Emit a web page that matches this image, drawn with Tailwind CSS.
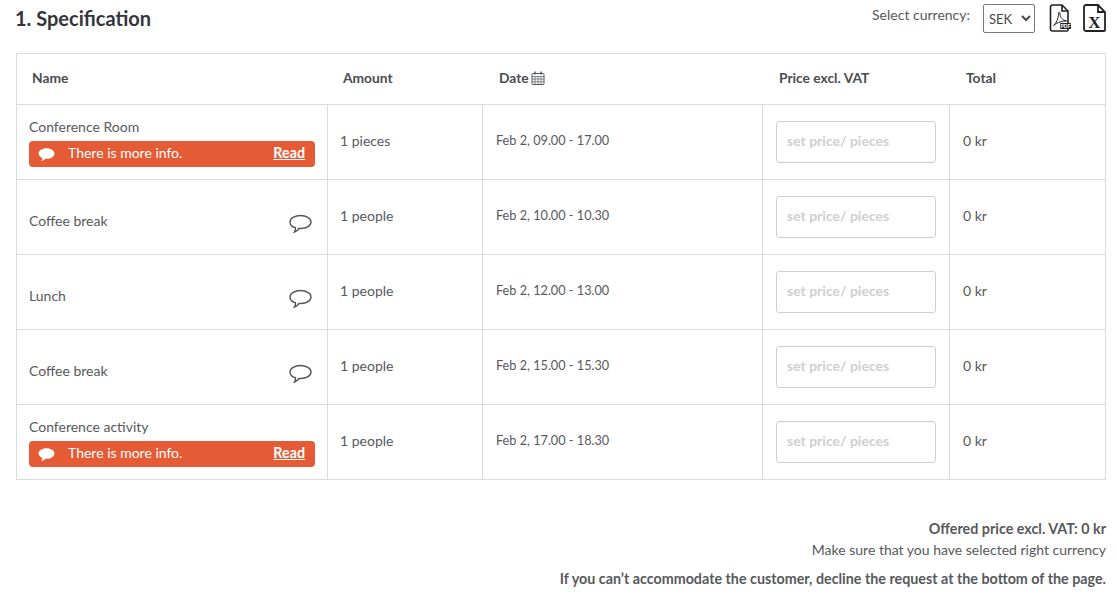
<!DOCTYPE html>
<html><head><meta charset="utf-8"><script src="https://cdn.jsdelivr.net/npm/@tailwindcss/browser@4"></script></head>
<body class="bg-white font-['Lato','Open_Sans',sans-serif] text-[#57595d] text-[14px] overflow-hidden">
<div class="w-[1117px] h-[597px] pl-[16px] pr-[11px] overflow-hidden">
  <div class="flex items-start justify-between h-[53px]">
    <h1 class="text-[20px] leading-[24px] mt-[6px] -ml-px font-bold text-[#33353a]">1. Specification</h1>
    <div class="flex items-start mt-[4px]">
      <span class="text-[14px] leading-[22px] mr-[13px]">Select currency:</span>
      <select class="w-[52px] h-[29px] border border-[#77797c] rounded-[2px] text-[13px] pl-px bg-white mr-[14px] text-[#44464a]"><option>SEK</option></select>
      <svg class="w-[22px] h-[28px] mr-[12px]" viewBox="0 0 22 28" fill="none" stroke="#222" stroke-width="1.600"><path d="M19 19V7l-6-6H3.500a2 2 0 0 0-2 2v22a2 2 0 0 0 2 2H18a1 1 0 0 0 1-1v-1"/><path d="M13 1v6h6"/><path d="M4.500 21.500C7 20 9.500 14 9.500 10c0-2.500 1.500-2.500 1.500 0 0 3 2.500 6.500 6.500 7-3.500 0-9 1-13 4.500z" stroke-width="1"/><rect x="11" y="19" width="11" height="6" rx="1" fill="#222" stroke="none"/><text x="16.500" y="24" text-anchor="middle" fill="#fff" stroke="none" font-family="Liberation Sans" font-weight="700" font-size="5">PDF</text></svg>
      <svg class="w-[23px] h-[28px]" viewBox="0 0 23 28" fill="none" stroke="#222" stroke-width="1.800"><path d="M1 3a2 2 0 0 1 2-2h12l7 7v18a1 1 0 0 1-1 1H3a2 2 0 0 1-2-2z"/><path d="M15 1v7h7"/><text x="11.500" y="24" text-anchor="middle" fill="#222" stroke="none" font-family="Liberation Serif" font-weight="700" font-size="17">X</text></svg>
    </div>
  </div>
  <div class="w-[1090px] border border-[#dcdcdc]">
    <div class="grid grid-cols-[311px_155px_280px_187px_1fr] h-[51px] items-center font-bold text-[13.8px] text-[#4a4c50] border-b border-[#dcdcdc] pb-[2px]">
      <div class="pl-[15px]">Name</div><div class="pl-[15px]">Amount</div>
      <div class="pl-[16px] flex items-center gap-[2px]">Date
        <svg class="w-[14px] h-[14px]" viewBox="0 0 14 14" fill="none" stroke="#55575b"><rect x="1" y="2.500" width="12" height="11" rx="1"/><path d="M1 5.500h12M1 8h12M1 10.800h12M4 5.500v8M7 5.500v8M10 5.500v8" stroke-width=".7"/><path d="M4 .5v3M10 .5v3" stroke-width="1.500"/></svg>
      </div>
      <div class="pl-[16px]">Price excl. VAT</div><div class="pl-[16px]">Total</div>
    </div>
    <div class="grid grid-cols-[311px_155px_280px_187px_1fr] h-[75px] border-b border-[#dcdcdc] items-center">
      <div class="h-full border-r border-[#dcdcdc] pl-[12px] pr-[12px] pt-[13px]">
        <div class="leading-[18px] mb-[5px]">Conference Room</div>
        <div class="h-[26px] bg-[#e55b36] rounded-[4px] flex items-center text-white pl-[9px] pr-[10px]">
          <svg class="w-[17px] h-[15px] mr-[13px]" viewBox="0 0 16 14" fill="#fff"><path d="M8 1c4.200 0 7.500 2.200 7.500 5S12.200 11 8 11H7c-1 1-2.500 2-4 2 .8-.8 1.200-1.800 1.200-2.800C2 9.300.5 7.800.5 6 .5 3.200 3.800 1 8 1z"/></svg>
          <span class="pb-[3px]">There is more info.</span><a class="ml-auto font-bold underline text-[14.3px] pb-[2px]">Read</a>
        </div>
      </div>
      <div class="h-full flex items-center border-r border-[#dcdcdc] pl-[12px] pb-[3px]">1 pieces</div>
      <div class="h-full flex items-center border-r border-[#dcdcdc] pl-[13px] text-[12.7px] pb-[3px]">Feb 2, 09.00 - 17.00</div>
      <div class="h-full flex items-center border-r border-[#dcdcdc] pl-[13px]"><input class="w-[160px] h-[42px] border border-[#cfcfcf] rounded-[3px] px-[10px] pb-[4px] font-bold text-[14px] placeholder:text-[#cfcfcf]" placeholder="set price/ pieces"></div>
      <div class="pl-[13px] pb-[3px]">0 kr</div>
    </div>
    <div class="grid grid-cols-[311px_155px_280px_187px_1fr] h-[75px] border-b border-[#dcdcdc] items-center">
      <div class="h-full border-r border-[#dcdcdc] pl-[12px] pr-[15px] pt-[6px] flex items-center justify-between">
        <span>Coffee break</span>
        <svg class="w-[23px] h-[20px] mt-[8px]" viewBox="0 0 23 20" fill="none" stroke="#55575b" stroke-width="1.400"><path d="M11.500 1.500c5.500 0 10.500 2.700 10.500 6.500s-4.500 6.500-10 6.500h-2c-1 1.500-2.500 3-4.500 3.500.7-1 1-2.500 1-4.200C3 13 1 10.500 1 8c0-3.800 5-6.500 10.500-6.500z"/></svg>
      </div>
      <div class="h-full flex items-center border-r border-[#dcdcdc] pl-[12px] pb-[3px]">1 people</div>
      <div class="h-full flex items-center border-r border-[#dcdcdc] pl-[13px] text-[12.7px] pb-[3px]">Feb 2, 10.00 - 10.30</div>
      <div class="h-full flex items-center border-r border-[#dcdcdc] pl-[13px]"><input class="w-[160px] h-[42px] border border-[#cfcfcf] rounded-[3px] px-[10px] pb-[4px] font-bold text-[14px] placeholder:text-[#cfcfcf]" placeholder="set price/ pieces"></div>
      <div class="pl-[13px] pb-[3px]">0 kr</div>
    </div>
    <div class="grid grid-cols-[311px_155px_280px_187px_1fr] h-[75px] border-b border-[#dcdcdc] items-center">
      <div class="h-full border-r border-[#dcdcdc] pl-[12px] pr-[15px] pt-[6px] flex items-center justify-between">
        <span>Lunch</span>
        <svg class="w-[23px] h-[20px] mt-[8px]" viewBox="0 0 23 20" fill="none" stroke="#55575b" stroke-width="1.400"><path d="M11.500 1.500c5.500 0 10.500 2.700 10.500 6.500s-4.500 6.500-10 6.500h-2c-1 1.500-2.500 3-4.500 3.500.7-1 1-2.500 1-4.200C3 13 1 10.500 1 8c0-3.800 5-6.500 10.500-6.500z"/></svg>
      </div>
      <div class="h-full flex items-center border-r border-[#dcdcdc] pl-[12px] pb-[3px]">1 people</div>
      <div class="h-full flex items-center border-r border-[#dcdcdc] pl-[13px] text-[12.7px] pb-[3px]">Feb 2, 12.00 - 13.00</div>
      <div class="h-full flex items-center border-r border-[#dcdcdc] pl-[13px]"><input class="w-[160px] h-[42px] border border-[#cfcfcf] rounded-[3px] px-[10px] pb-[4px] font-bold text-[14px] placeholder:text-[#cfcfcf]" placeholder="set price/ pieces"></div>
      <div class="pl-[13px] pb-[3px]">0 kr</div>
    </div>
    <div class="grid grid-cols-[311px_155px_280px_187px_1fr] h-[75px] border-b border-[#dcdcdc] items-center">
      <div class="h-full border-r border-[#dcdcdc] pl-[12px] pr-[15px] pt-[6px] flex items-center justify-between">
        <span>Coffee break</span>
        <svg class="w-[23px] h-[20px] mt-[8px]" viewBox="0 0 23 20" fill="none" stroke="#55575b" stroke-width="1.400"><path d="M11.500 1.500c5.500 0 10.500 2.700 10.500 6.500s-4.500 6.500-10 6.500h-2c-1 1.500-2.500 3-4.500 3.500.7-1 1-2.500 1-4.200C3 13 1 10.500 1 8c0-3.800 5-6.500 10.500-6.500z"/></svg>
      </div>
      <div class="h-full flex items-center border-r border-[#dcdcdc] pl-[12px] pb-[3px]">1 people</div>
      <div class="h-full flex items-center border-r border-[#dcdcdc] pl-[13px] text-[12.7px] pb-[3px]">Feb 2, 15.00 - 15.30</div>
      <div class="h-full flex items-center border-r border-[#dcdcdc] pl-[13px]"><input class="w-[160px] h-[42px] border border-[#cfcfcf] rounded-[3px] px-[10px] pb-[4px] font-bold text-[14px] placeholder:text-[#cfcfcf]" placeholder="set price/ pieces"></div>
      <div class="pl-[13px] pb-[3px]">0 kr</div>
    </div>
    <div class="grid grid-cols-[311px_155px_280px_187px_1fr] h-[74px] items-center">
      <div class="h-full border-r border-[#dcdcdc] pl-[12px] pr-[12px] pt-[13px]">
        <div class="leading-[18px] mb-[5px]">Conference activity</div>
        <div class="h-[26px] bg-[#e55b36] rounded-[4px] flex items-center text-white pl-[9px] pr-[10px]">
          <svg class="w-[17px] h-[15px] mr-[13px]" viewBox="0 0 16 14" fill="#fff"><path d="M8 1c4.200 0 7.500 2.200 7.500 5S12.200 11 8 11H7c-1 1-2.500 2-4 2 .8-.8 1.200-1.800 1.200-2.800C2 9.300.5 7.800.5 6 .5 3.200 3.800 1 8 1z"/></svg>
          <span class="pb-[3px]">There is more info.</span><a class="ml-auto font-bold underline text-[14.3px] pb-[2px]">Read</a>
        </div>
      </div>
      <div class="h-full flex items-center border-r border-[#dcdcdc] pl-[12px] pb-[3px]">1 people</div>
      <div class="h-full flex items-center border-r border-[#dcdcdc] pl-[13px] text-[12.7px] pb-[3px]">Feb 2, 17.00 - 18.30</div>
      <div class="h-full flex items-center border-r border-[#dcdcdc] pl-[13px]"><input class="w-[160px] h-[42px] border border-[#cfcfcf] rounded-[3px] px-[10px] pb-[4px] font-bold text-[14px] placeholder:text-[#cfcfcf]" placeholder="set price/ pieces"></div>
      <div class="pl-[13px] pb-[3px]">0 kr</div>
    </div>
  </div>
  <div class="w-[1090px] text-right pt-[39px] text-[14px]">
    <div class="font-bold leading-[20px] text-[14.3px]">Offered price excl. VAT: 0 kr</div>
    <div class="leading-[20px] mt-[1px]">Make sure that you have selected right currency</div>
    <div class="font-bold leading-[20px] mt-[9px] text-[14.3px]">If you can’t accommodate the customer, decline the request at the bottom of the page.</div>
  </div>
</div>
</body></html>
